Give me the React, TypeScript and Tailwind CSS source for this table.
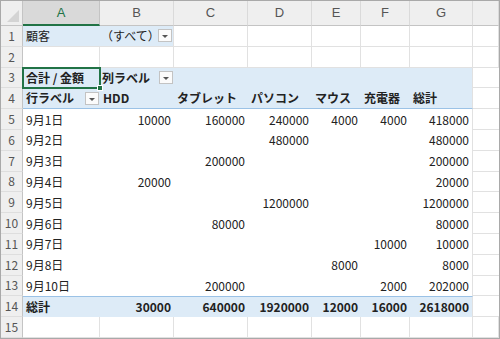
import React from "react";

const grid = "grid grid-cols-[22px_77px_74px_74px_64px_49px_49px_63px_1fr]";
const rowH = "h-[20.8px]";
const blue = "bg-[#ddebf7]";
const gl = "border-r border-b border-[#e1e1e1]";

const DropBtn = () => (
    <span className="flex h-[13px] w-[14px] shrink-0 items-center justify-center border border-[#c3c3c3] bg-[#fbfbfb]">
        <span className="mt-[2px] h-0 w-0 border-x-[3px] border-t-[3px] border-x-transparent border-t-[#555]" />
    </span>
);

const RowNum: React.FC<{ n: number }> = ({ n }) => (
    <div className="flex items-center justify-center border-r border-b border-r-[#c4c4c4] border-b-[#dedede] bg-[#efefef] text-[12px] font-normal text-[#555]">
        {n}
    </div>
);

const cols = ["A", "B", "C", "D", "E", "F", "G", ""];

const data: string[][] = [
    ["9月1日", "10000", "160000", "240000", "4000", "4000", "418000"],
    ["9月2日", "", "", "480000", "", "", "480000"],
    ["9月3日", "", "200000", "", "", "", "200000"],
    ["9月4日", "20000", "", "", "", "", "20000"],
    ["9月5日", "", "", "1200000", "", "", "1200000"],
    ["9月6日", "", "80000", "", "", "", "80000"],
    ["9月7日", "", "", "", "", "10000", "10000"],
    ["9月8日", "", "", "", "8000", "", "8000"],
    ["9月10日", "", "200000", "", "", "2000", "202000"],
];

const heads = ["HDD", "タブレット", "パソコン", "マウス", "充電器", "総計"];
const totals = ["30000", "640000", "1920000", "12000", "16000", "2618000"];

export default function App() {
    return (
        <div className="h-[339px] w-[500px] overflow-hidden border border-[#a9a9a9] bg-white font-['Noto_Sans_CJK_JP',sans-serif] text-[12px] text-[#222]">
            {/* column headers */}
            <div className={`${grid} h-[25px] bg-[#efefef]`}>
                <div className="relative border-r border-b border-[#c4c4c4]">
                    <span className="absolute right-[3px] bottom-[3px] h-0 w-0 [border-bottom:12px_solid_#d4d4d4] [border-left:12px_solid_transparent]" />
                </div>
                {cols.map((c) => (
                    <div
                        key={c || "h"}
                        className={`flex items-center justify-center font-['Liberation_Sans',sans-serif] text-[13px] ${
                            c === "A"
                                ? "border-r border-r-[#c4c4c4] border-b-2 border-b-[#217346] bg-[#d9d9d9] text-[#217346]"
                                : "border-r border-b border-r-[#dadada] border-b-[#c4c4c4] text-[#555]"
                        }`}
                    >
                        {c}
                    </div>
                ))}
            </div>

            {/* row 1 */}
            <div className={`${grid} ${rowH}`}>
                <RowNum n={1} />
                <div className={`${blue} border-b border-[#e1e1e1] flex items-center pl-[3px]`}>顧客</div>
                <div className={`${blue} border-b border-r border-[#e1e1e1] flex items-center justify-between pl-[1px] pr-[1px]`}>
                    <span>（すべて）</span>
                    <DropBtn />
                </div>
                {[0, 1, 2, 3, 4, 5].map((i) => (
                    <div key={i} className={gl} />
                ))}
            </div>

            {/* row 2 */}
            <div className={`${grid} ${rowH}`}>
                <RowNum n={2} />
                {[0, 1, 2, 3, 4, 5, 6, 7].map((i) => (
                    <div key={i} className={gl} />
                ))}
            </div>

            {/* row 3 */}
            <div className={`${grid} ${rowH} font-bold`}>
                <RowNum n={3} />
                <div className={`${blue} relative flex items-center pl-[3px]`}>
                    合計 / 金額
                    <span className="absolute -top-[1px] -left-[1px] -right-[1px] -bottom-[1px] border-2 border-[#217346]" />
                    <span className="absolute -right-[3px] -bottom-[3px] h-[6px] w-[6px] border border-white bg-[#217346]" />
                </div>
                <div className={`${blue} flex items-center justify-between pl-[2px] pr-[1px]`}>
                    <span>列ラベル</span>
                    <DropBtn />
                </div>
                {[0, 1, 2, 3, 4].map((i) => (
                    <div key={i} className={`${blue} ${i === 4 ? "border-r border-[#e1e1e1]" : ""}`} />
                ))}
                <div className="border-b border-[#e1e1e1]" />
            </div>

            {/* row 4 */}
            <div className={`${grid} ${rowH} font-bold`}>
                <RowNum n={4} />
                <div className={`${blue} border-b border-[#9bc2e6] flex items-center justify-between pl-[3px] pr-[1px]`}>
                    <span>行ラベル</span>
                    <DropBtn />
                </div>
                {heads.map((h, i) => (
                    <div
                        key={h}
                        className={`${blue} border-b border-b-[#9bc2e6] flex items-center pl-[3px] ${
                            i === 5 ? "border-r border-r-[#e1e1e1]" : ""
                        }`}
                    >
                        {h}
                    </div>
                ))}
                <div className="border-b border-[#e1e1e1]" />
            </div>

            {/* rows 5-13 */}
            {data.map((r, ri) => (
                <div key={ri} className={`${grid} ${rowH}`}>
                    <RowNum n={ri + 5} />
                    <div className="flex items-center pl-[3px]">{r[0]}</div>
                    {r.slice(1).map((v, i) => (
                        <div
                            key={i}
                            className={`flex items-center justify-end pr-[3px] ${i === 5 ? "border-r border-[#e1e1e1]" : ""}`}
                        >
                            {v}
                        </div>
                    ))}
                    <div className="border-b border-[#e1e1e1]" />
                </div>
            ))}

            {/* row 14 */}
            <div className={`${grid} ${rowH} font-bold`}>
                <RowNum n={14} />
                <div className={`${blue} border-t border-[#9bc2e6] flex items-center pl-[3px]`}>総計</div>
                {totals.map((v, i) => (
                    <div
                        key={i}
                        className={`${blue} border-t border-t-[#9bc2e6] flex items-center justify-end pr-[3px] ${
                            i === 5 ? "border-r border-r-[#e1e1e1]" : ""
                        }`}
                    >
                        {v}
                    </div>
                ))}
                <div className="border-b border-[#e1e1e1]" />
            </div>

            {/* row 15 */}
            <div className={`${grid} ${rowH}`}>
                <RowNum n={15} />
                {[0, 1, 2, 3, 4, 5, 6, 7].map((i) => (
                    <div key={i} className={gl} />
                ))}
            </div>
        </div>
    );
}
